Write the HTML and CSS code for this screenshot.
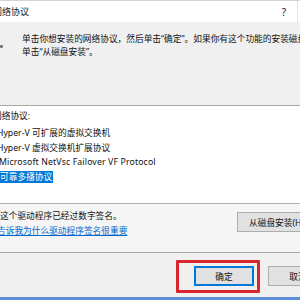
FILE: index.html
```html
<!DOCTYPE html>
<html lang="zh-CN">
<head>
<meta charset="utf-8">
<link rel="stylesheet" href="styles.css">
</head>
<body>
<div class="win">
  <div class="titlebar">
    <span class="title">选择网络协议</span>
    <span class="help">?</span>
    <span class="edge"></span>
  </div>
  <div class="header">
    <div class="hicon"></div>
    <div class="htext">
      <p>单击你想安装的网络协议，然后单击“确定”。如果你有这个功能的安装磁盘，</p>
      <p>单击“从磁盘安装”。</p>
    </div>
  </div>
  <div class="listpanel">
    <div class="label">网络协议:</div>
    <ul class="list">
      <li>Hyper-V 可扩展的虚拟交换机</li>
      <li>Hyper-V 虚拟交换机扩展协议</li>
      <li class="latin">Microsoft NetVsc Failover VF Protocol</li>
      <li><span class="sel">可靠多播协议</span></li>
    </ul>
  </div>
  <div class="sigpanel">
    <div class="sigtext">
      <div class="sig">这个驱动程序已经过数字签名。</div>
      <a class="link" href="#">告诉我为什么驱动程序签名很重要</a>
    </div>
    <button class="btn disk">从磁盘安装(H)...</button>
  </div>
  <div class="footer">
    <button class="btn ok">确定</button>
    <button class="btn cancel">取消</button>
    <div class="redbox"></div>
  </div>
  <div class="bottomline"></div>
</div>
</body>
</html>
```

FILE: styles.css
```css
* { box-sizing: border-box; }
html, body { margin: 0; padding: 0; }
body {
  width: 300px;
  height: 300px;
  overflow: hidden;
  background: #f0f0f0;
  font-family: "Noto Sans", "Noto Sans CJK SC", sans-serif;
  font-size: 8.7px;
  color: #111;
}
.win {
  position: relative;
  width: 300px;
  height: 300px;
  overflow: hidden;
  display: flex;
  flex-direction: column;
}
.titlebar {
  position: relative;
  height: 22px;
  flex: none;
  background: #fff;
  border-top: 1px solid #d4d4d4;
  display: flex;
  align-items: center;
  white-space: nowrap;
}
.title {
  margin-left: -25px;
  font-size: 9px;
  color: #222;
}
.help {
  margin-left: auto;
  margin-right: 14px;
  font-size: 10px;
  color: #222;
}
.edge {
  position: absolute;
  right: 2px;
  top: 0;
  width: 1px;
  height: 21px;
  background: #e2e2e2;
}
.header {
  height: 84px;
  flex: none;
  background: #f0f0f0;
  border-bottom: 1px solid #a8a8a8;
  display: flex;
  white-space: nowrap;
  overflow: hidden;
}
.hicon {
  width: 3px;
  height: 3px;
  margin-top: 23px;
  margin-right: 19px;
  background: #777;
  border-radius: 1px;
  flex: none;
}
.htext {
  padding-top: 11px;
  line-height: 13px;
}
.htext p { margin: 0; }
.listpanel {
  height: 98px;
  flex: none;
  background: #fff;
  border-bottom: 1px solid #b4b4b4;
  padding-top: 3px;
  white-space: nowrap;
}
.label {
  margin-left: -7px;
  line-height: 14px;
}
.list {
  list-style: none;
  margin: 3px 0 0 0;
  padding: 0;
  line-height: 14.5px;
}
.list li { margin-left: -3px; }
.list .latin { letter-spacing: 0.15px; margin-left: -1px; }
.sel {
  display: inline-block;
  background: #0078d7;
  color: #fff;
  padding: 0 1px 0 3px;
  line-height: 12px;
  margin-top: 1px;
}
.sigpanel {
  height: 49px;
  flex: none;
  background: #f5f5f5;
  border-bottom: 1px solid #a8a8a8;
  display: flex;
  align-items: flex-start;
  white-space: nowrap;
}
.sigtext {
  padding-top: 5px;
  line-height: 15px;
}
.link {
  display: block;
  margin-left: -3px;
  color: #0066cc;
  text-decoration: underline;
}
.btn {
  font-family: inherit;
  font-size: 8.7px;
  color: #111;
  background: #e1e1e1;
  border: 1px solid #adadad;
  padding: 0;
  height: 20px;
  white-space: nowrap;
}
.disk {
  margin-left: auto;
  margin-top: 8px;
  margin-right: -40px;
  width: 103px;
  text-align: left;
  padding-left: 11px;
}
.footer {
  position: relative;
  flex: 1;
  background: #f0f0f0;
  display: flex;
  align-items: flex-start;
  padding-top: 13px;
  padding-left: 194px;
  gap: 14px;
}
.ok {
  width: 60px;
  flex: none;
  border: 1px solid #0078d7;
  box-shadow: inset 0 0 0 1px #0078d7;
}
.cancel {
  width: 60px;
  flex: none;
}
.redbox {
  position: absolute;
  left: 176px;
  top: 7px;
  width: 84px;
  height: 33px;
  border: 3px solid #d8262c;
  border-radius: 1px;
}
.bottomline {
  height: 3px;
  flex: none;
  background: #5b8fd6;
}
```
